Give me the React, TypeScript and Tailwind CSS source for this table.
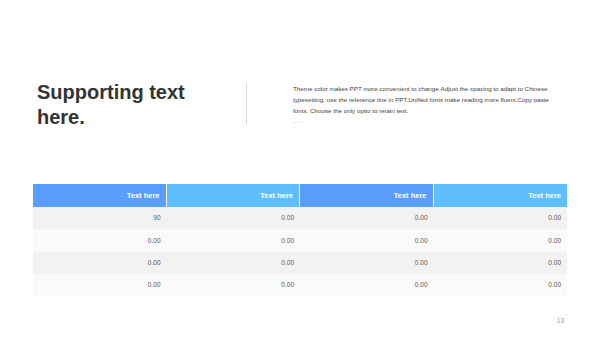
const rows = [
  ['90', '0.00', '0.00', '0.00'],
  ['0.00', '0.00', '0.00', '0.00'],
  ['0.00', '0.00', '0.00', '0.00'],
  ['0.00', '0.00', '0.00', '0.00'],
]

function App() {
  return (
    <main className="w-[600px] h-[337px] bg-white flex flex-col font-['Liberation_Sans',Arial,sans-serif] text-[#333]">
      <section className="flex items-start pt-[80px] h-[184px]">
        <h1 className="ml-[37px] w-[200px] text-[20px] leading-[25px] font-bold text-[#333]">
          Supporting text here.
        </h1>
        <div className="ml-[9px] mt-[3px] w-px h-[41px] bg-[#d9d9d9]" />
        <div className="ml-[46px] mt-[3px] w-[262px]">
          <p className="text-[6.25px] leading-[11px] text-[#444]">
            Theme color makes PPT more convenient to change.Adjust the spacing to adapt to Chinese typesetting, use the reference line in PPT.Unified fonts make reading more fluent.Copy paste fonts. Choose the only optio to retain text.
          </p>
          <p className="text-[6px] leading-[11px] text-[#aaa]">... ...</p>
        </div>
      </section>

      <div className="ml-[33px] w-[534px]">
        <div className="grid grid-cols-4 h-[23px]">
          <div className="bg-[#5a9dfd] border-r border-white flex items-center justify-end pr-[6px] text-white text-[7.5px] font-bold">Text here</div>
          <div className="bg-[#5fbefd] border-r border-white flex items-center justify-end pr-[6px] text-white text-[7.5px] font-bold">Text here</div>
          <div className="bg-[#5a9dfd] border-r border-white flex items-center justify-end pr-[6px] text-white text-[7.5px] font-bold">Text here</div>
          <div className="bg-[#5fbefd] flex items-center justify-end pr-[6px] text-white text-[7.5px] font-bold">Text here</div>
        </div>
        {rows.map((r, i) => (
          <div key={i} className={`grid grid-cols-4 h-[22.3px] ${i % 2 === 0 ? 'bg-[#f2f2f2]' : 'bg-[#fafafa]'}`}>
            {r.map((c, j) => (
              <div key={j} className="flex items-center justify-end pr-[6px] text-[6.5px] text-[#555]">{c}</div>
            ))}
          </div>
        ))}
      </div>

      <div className="mt-auto mb-[11px] mr-[36px] self-end text-[6.5px] text-[#999]">13</div>
    </main>
  )
}

export default App
